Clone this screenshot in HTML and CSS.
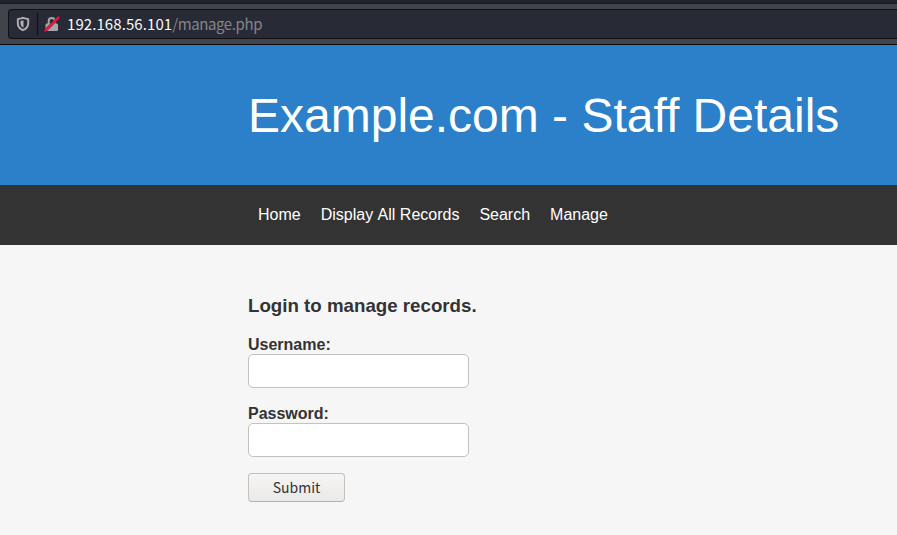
FILE: index.html
```html
<!DOCTYPE html>
<html lang="en">
<head>
<meta charset="utf-8">
<title>Staff Details</title>
<link rel="stylesheet" href="styles.css">
</head>
<body>
<div class="toolbar">
  <div class="urlbar">
    <svg class="shield" width="14" height="16" viewBox="0 0 14 16"><path d="M7 1.800 12.200 3.200v4c0 3.400-2 5.600-5.200 7-3.200-1.400-5.200-3.600-5.200-7v-4z" fill="none" stroke="#b0b0b3" stroke-width="1.900" stroke-linejoin="round"/><path d="M7.500 4.300v7.500c-2-1-3-2.500-3-4.500V5z" fill="#b0b0b3"/></svg>
    <span class="divider"></span>
    <svg class="lock" width="16" height="16" viewBox="0 0 16 16"><path d="M4.700 8V5a3 3 0 0 1 6 0V8" fill="none" stroke="#a5a6aa" stroke-width="2"/><rect x="1.500" y="7.500" width="12.500" height="7.500" rx="1.200" fill="#a5a6aa"/><path d="M1.500 14.500 14.500 1.500" stroke="#282a35" stroke-width="2.800"/><path d="M1.500 14.500 14.500 1.500" stroke="#ec1944" stroke-width="2.200" stroke-linecap="round"/></svg>
    <span class="url"><span class="host">192.168.56.101</span>/manage.php</span>
  </div>
</div>
<header class="banner"><h1>Example.com - Staff Details</h1></header>
<nav class="nav"><a>Home</a><a class="all">Display All Records</a><a>Search</a><a>Manage</a></nav>
<main class="content">
  <h2>Login to manage records.</h2>
  <form>
    <label for="u">Username:</label>
    <input id="u" type="text">
    <label for="p">Password:</label>
    <input id="p" type="password">
    <button type="button">Submit</button>
  </form>
</main>
</body>
</html>
```
FILE: styles.css
```css
* { box-sizing: border-box; }
body { margin: 0; background: #f6f6f6; color: #333; font: 16px/20px "Liberation Sans", Arial, sans-serif; height: 535px; overflow: hidden; }
.toolbar { height: 45px; padding: 6px 0 5px 8px; background: #42444c; border-top: 3px solid #22232d; border-bottom: 1px solid #0c0c0d; box-shadow: inset 0 1px #191a21; }
.urlbar { height: 30px; display: flex; align-items: center; background: #282a35; border: 1px solid #101116; border-right: 0; border-radius: 4px 0 0 4px; padding-left: 7px; }
.divider { width: 1px; height: 22px; background: #0e0f14; margin: 0 7px; }
.lock { margin-left: -1px; }
.url { margin-left: 7px; font: 15px/20px "Noto Sans CJK JP", sans-serif; letter-spacing: -0.400px; color: #85868c; white-space: nowrap; }
.host { color: #f9f9fa; letter-spacing: 0.080px; }
.banner { height: 140px; padding: 43px 0 0 248px; background: #2c80c9; color: #fff; }
h1 { margin: 0; font-size: 48px; line-height: 56px; font-weight: 400; white-space: nowrap; }
.nav { height: 60px; padding: 20px 0 0 258px; display: flex; gap: 20px; background: #333; color: #fff; }
.all { width: 138.700px; white-space: nowrap; font-kerning: none; }
.content { padding: 50px 0 0 248px; }
h2 { margin: 0 0 19px; font-size: 18.720px; line-height: 21px; }
form { display: flex; flex-direction: column; align-items: flex-start; }
label { font-weight: 700; line-height: 20px; height: 19px; }
input { width: 221px; height: 34px; margin: 0 0 16px; border: 1px solid #c6c1bc; border-radius: 5px; background: #fff; }
button { width: 97px; height: 29px; padding: 0 0 2px; border: 1px solid #c5c0bb; border-bottom-color: #b5b0ab; border-radius: 4px; background: linear-gradient(#f6f5f4, #eae9e8); color: #2e3436; font: 14px/20px "Noto Sans CJK JP", sans-serif; }
```
